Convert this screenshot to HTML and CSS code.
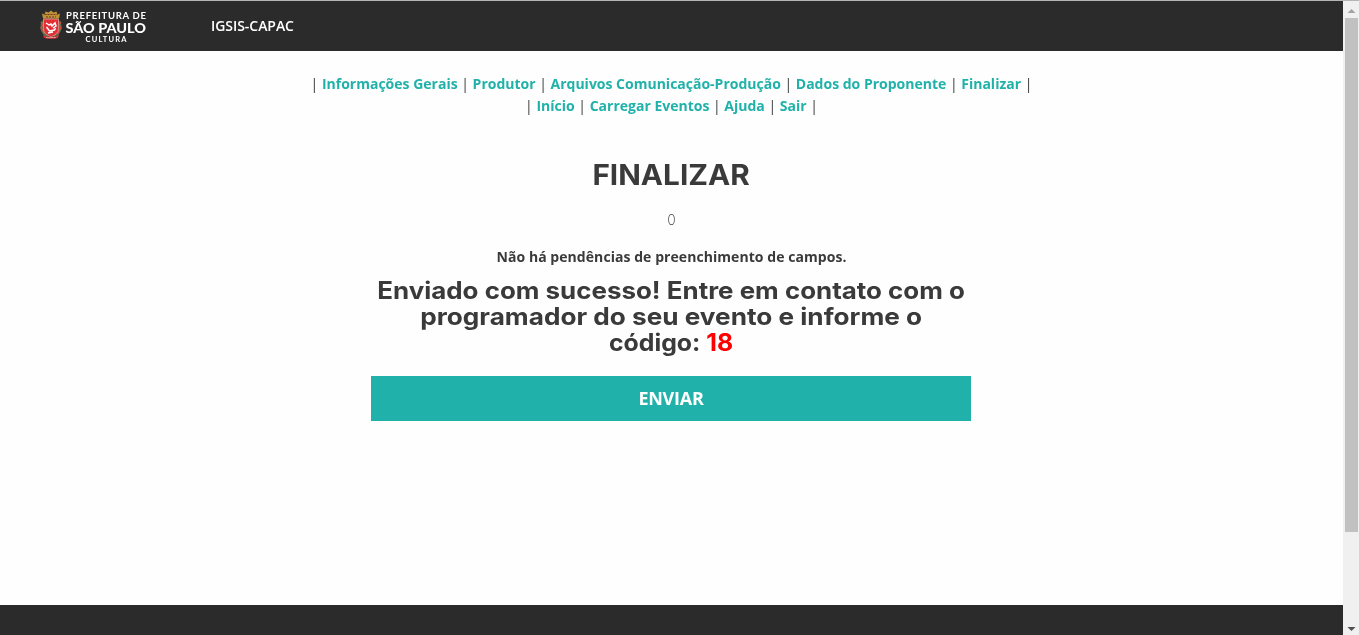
FILE: index.html
```html
<!DOCTYPE html>
<html lang="pt-br">
<head>
<meta charset="utf-8">
<title>IGSIS-CAPAC</title>
<link rel="stylesheet" href="styles.css">
</head>
<body>
<div class="page">
  <header class="topbar">
    <svg class="logo" width="110" height="38" viewBox="38 8 110 38" role="img" aria-label="Prefeitura de São Paulo Cultura">
      <path d="M43 18.500l-1-5 2.500 1 1-3 3 1 2.500-2 2.500 2 3-1 1 3 2.500-1-1 5z" fill="#bd9136"/>
      <path d="M44.500 14.500h13M46 17h10" stroke="#7b3524" stroke-width="1.200" stroke-dasharray="2 1"/>
      <path d="M43 21q-2 4-1 9l3 5 3 2M59 21q2 4 1 9l-3 5-3 2" fill="none" stroke="#527448" stroke-width="2.400"/>
      <path d="M41 22l2 3-2 3 2 2 1 4M61 22l-2 3 2 3-2 2-1 4" fill="none" stroke="#d94b45" stroke-width="1.300"/>
      <path d="M43.500 19h15v10q0 5-7.500 8-7.500-3-7.500-8z" fill="#e32e36" stroke="#edb5a7" stroke-width=".7"/>
      <path d="M46 23l3 2 2-1 1 2 3-3 1 3-3 2M46.500 27l3 4 5-1 1-2M48 33l5-1" fill="none" stroke="#fff" stroke-width="1.500"/>
      <path d="M43 35q4 2 8 2t8-2l-1 3q-7 2-14 0z" fill="#c93338"/>
      <path d="M46 37.500h10" stroke="#e7b5ad" stroke-width=".7"/>
      <text class="logo-small" x="66" y="19" textLength="80">PREFEITURA DE</text>
      <text class="logo-main" x="65.500" y="32.700" textLength="80.500" lengthAdjust="spacingAndGlyphs">SÃO PAULO</text>
      <text class="logo-culture" x="85.500" y="42.300" textLength="41">CULTURA</text>
    </svg>
    <span class="brand">IGSIS-CAPAC</span>
  </header>
  <main class="content">
    <nav class="menu">
      <div class="menu-row">| <a>Informações Gerais</a> | <a>Produtor</a> | <a>Arquivos Comunicação-Produção</a> | <a>Dados do Proponente</a> | <a>Finalizar</a> |</div>
      <div class="menu-row">| <a>Início</a> | <a>Carregar Eventos</a> | <a>Ajuda</a> | <a>Sair</a> |</div>
    </nav>
    <h1 class="title">FINALIZAR</h1>
    <p class="count">0</p>
    <p class="status">Não há pendências de preenchimento de campos.</p>
    <h2 class="message">
      <span class="line line-a">Enviado com sucesso! Entre em contato com o</span>
      <span class="line line-b">programador do seu evento e informe o</span>
      <span class="line line-c">código: <b class="code">18</b></span>
    </h2>
    <button class="submit" type="button">ENVIAR</button>
  </main>
  <footer class="footer"></footer>
</div>
<aside class="scrollbar">
  <svg width="16" height="17"><path d="M4.500 12h8L8.500 8z" fill="#a3a3a3"/></svg>
  <div class="thumb"></div>
  <svg class="down" width="16" height="17"><path d="M4.500 9h8L8.500 13z" fill="#505050"/></svg>
</aside>
</body>
</html>
```
FILE: styles.css
```css
* { box-sizing: border-box; }
body { margin: 0; height: 635px; display: flex; overflow: hidden; border-top: 1px solid #b2b5b5; background: #fefefe; color: #3a3a3a; font-family: "Open Sans", sans-serif; font-size: 14px; }
.page { width: 1343px; display: flex; flex-direction: column; will-change: transform; }
.topbar { height: 50px; flex: none; display: flex; align-items: flex-start; padding: 7px 38px 0; background: #2b2b2b; }
.logo { flex: none; overflow: visible; fill: #fff; }
.logo-small { font: 700 9.500px Lato, sans-serif; }
.logo-main { font: 900 14px Lato, sans-serif; }
.logo-culture { font: 700 7.500px Lato, sans-serif; }
.brand { margin: 8px 0 0 63px; color: #fff; line-height: 20px; font-weight: 550; letter-spacing: -.05px; }
.content { flex: 1; display: flex; flex-direction: column; align-items: center; }
.menu { margin-top: 22px; text-align: center; font-weight: 400; line-height: 22px; white-space: nowrap; }
.menu-row { height: 22px; }
.menu a { color: #20b2aa; font-weight: 700; }
.title { margin: 41px 0 0; font: 700 28px/34px Inter, sans-serif; transform: scaleX(1.062); }
.count { margin: 17px 0 0; line-height: 22px; font-weight: 350; }
.status { margin: 15px 0 0; line-height: 22px; font-weight: 670; letter-spacing: .06px; }
.message { display: flex; flex-direction: column; align-items: center; margin: 10px 0 0; font: 650 24px/26px Inter, sans-serif; }
.line { white-space: nowrap; }
.line-a { transform: scaleX(1.08); }
.line-b { transform: scaleX(1.09); }
.line-c { transform: scaleX(1.035); }
.code { color: #f00; font-weight: 700; }
.submit { width: 600px; height: 45px; margin: 20px 1px 0 0; padding: 0 0 2px; border: 0; background: #20b2aa; color: #fff; font: 750 18px/24px "Open Sans", sans-serif; letter-spacing: -.25px; }
.footer { height: 30px; flex: none; background: #2b2b2b; }
.scrollbar { width: 16px; background: #f0f0f0; display: flex; flex-direction: column; }
.scrollbar svg { flex: none; }
.thumb { width: 13px; height: 514px; margin-left: 2px; background: #c1c1c1; }
.down { margin-top: auto; }
```
